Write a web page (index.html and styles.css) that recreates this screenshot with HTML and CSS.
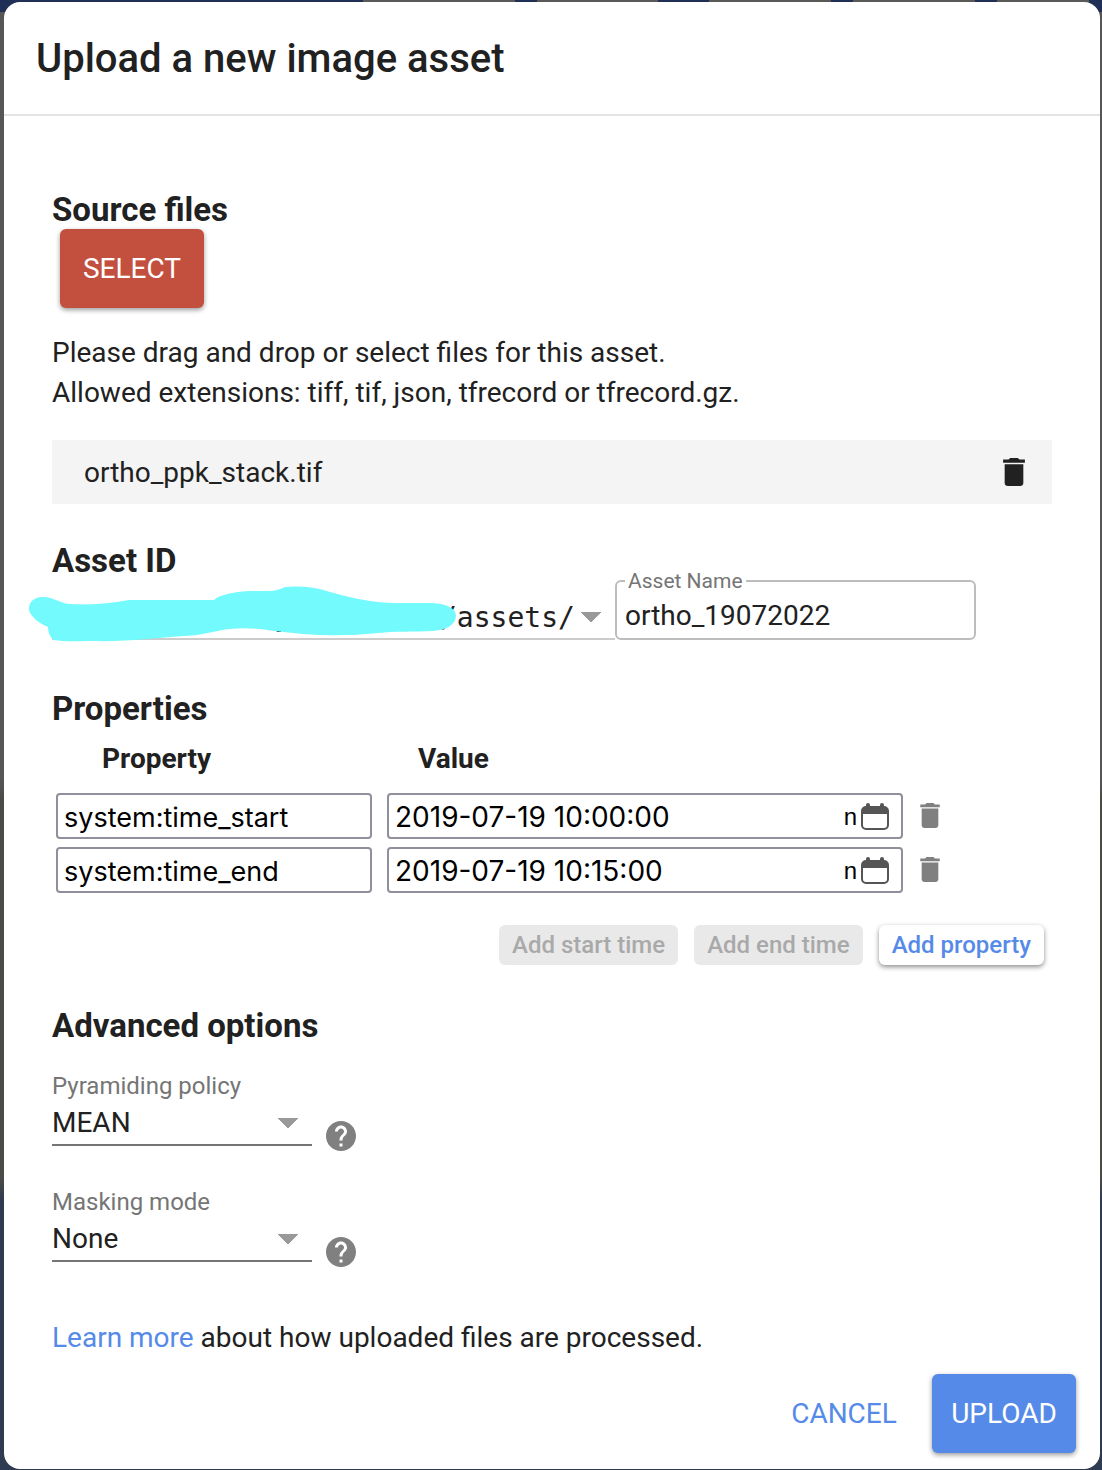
FILE: index.html
```html
<!DOCTYPE html>
<html lang="en">
<head>
<meta charset="utf-8">
<title>Upload a new image asset</title>
<link rel="stylesheet" href="styles.css">
</head>
<body>
<svg class="defs" aria-hidden="true">
  <symbol id="trash" viewBox="5 3 14 18"><path d="M6 19c0 1.100.9 2 2 2h8c1.100 0 2-.9 2-2V7H6v12zM19 4h-3.500l-1-1h-5l-1 1H5v2h14V4z"/></symbol>
  <symbol id="calendar" viewBox="0 0 28 28"><path d="M5 3V2a1.500 1.500 0 0 1 4 0v1h10V2a1.500 1.500 0 0 1 4 0v1a5 5 0 0 1 5 5v14a5 5 0 0 1-5 5H5a5 5 0 0 1-5-5V8a5 5 0 0 1 5-5zM2 11v11a3 3 0 0 0 3 3h18a3 3 0 0 0 3-3V11z" fill-rule="evenodd"/></symbol>
  <symbol id="help" viewBox="2 2 20 20"><path d="M12 2C6.480 2 2 6.480 2 12s4.480 10 10 10 10-4.480 10-10S17.520 2 12 2zm1 17h-2v-2h2v2zm2.070-7.750l-.9.920C13.450 12.900 13 13.500 13 15h-2v-.5c0-1.100.45-2.100 1.170-2.830l1.240-1.260c.37-.36.59-.86.59-1.410 0-1.100-.9-2-2-2s-2 .9-2 2H8c0-2.210 1.790-4 4-4s4 1.790 4 4c0 .88-.36 1.680-.93 2.250z"/></symbol>
</svg>
<main class="dialog">
  <header class="dialog-header"><h1>Upload a new image asset</h1></header>
  <form class="dialog-body" id="upload-form">
    <section class="source">
      <h2>Source files</h2>
      <button type="button" class="btn btn-red">SELECT</button>
      <p>Please drag and drop or select files for this asset.<br>Allowed extensions: tiff, tif, json, tfrecord or tfrecord.gz.</p>
      <div class="file">
        <span>ortho_ppk_stack.tif</span>
        <button type="button" class="icon-btn" aria-label="Remove file"><svg class="trash-large"><use href="#trash"/></svg></button>
      </div>
    </section>

    <section class="asset">
      <h2>Asset ID</h2>
      <div class="asset-row">
        <div class="root">
          <select class="root-select" aria-label="Asset root"><option>/assets/</option></select>
          <svg class="redaction" viewBox="0 0 432 58" aria-hidden="true">
            <path d="M246 42h6v4h-4z" fill="#222"/>
            <path d="M13 11C22 10 33 18 41 18C57 19 73 18 88 16Q94 15 100 14H185Q192 7 220 5H240Q248 5 256 1Q280-1 301 6Q340 17 365 17H403C418 18 427 22 427 30C426 40 416 44 403 45C388 46 363 45 350 47Q310 51 274 48L245 45Q225 41 200 43C180 46 175 49 155 50C125 52 100 56 60 55Q35 56 25 54Q19 50 19 41C12 38 2 32 0 24C-1 17 5 11 13 11Z" fill="#72fafd"/>
          </svg>
        </div>
        <fieldset class="outlined">
          <legend><label for="asset-name">Asset Name</label></legend>
          <input id="asset-name" type="text" value="ortho_19072022">
        </fieldset>
      </div>
    </section>

    <section class="properties">
      <h2>Properties</h2>
      <table>
        <thead><tr><th class="col-name">Property</th><th class="col-value">Value</th><td></td></tr></thead>
        <tbody>
          <tr>
            <td><input class="field" type="text" aria-label="Property" value="system:time_start"></td>
            <td><div class="field date"><input type="text" aria-label="Value" value="2019-07-19 10:00:00"><span class="hint">n</span><button type="button" class="icon-btn" aria-label="Pick date"><svg class="calendar"><use href="#calendar"/></svg></button></div></td>
            <td><button type="button" class="icon-btn remove" aria-label="Remove property"><svg class="trash-small"><use href="#trash"/></svg></button></td>
          </tr>
          <tr>
            <td><input class="field" type="text" aria-label="Property" value="system:time_end"></td>
            <td><div class="field date"><input type="text" aria-label="Value" value="2019-07-19 10:15:00"><span class="hint">n</span><button type="button" class="icon-btn" aria-label="Pick date"><svg class="calendar"><use href="#calendar"/></svg></button></div></td>
            <td><button type="button" class="icon-btn remove" aria-label="Remove property"><svg class="trash-small"><use href="#trash"/></svg></button></td>
          </tr>
        </tbody>
      </table>
      <div class="property-actions">
        <button type="button" class="small" disabled>Add start time</button>
        <button type="button" class="small" disabled>Add end time</button>
        <button type="button" class="small raised">Add property</button>
      </div>
    </section>

    <section class="advanced">
      <h2>Advanced options</h2>
      <div class="option">
        <div class="option-field">
          <label for="pyramiding">Pyramiding policy</label>
          <select id="pyramiding"><option>MEAN</option></select>
        </div>
        <button type="button" class="icon-btn" aria-label="Pyramiding policy help"><svg class="help"><use href="#help"/></svg></button>
      </div>
      <div class="option">
        <div class="option-field">
          <label for="masking">Masking mode</label>
          <select id="masking"><option>None</option></select>
        </div>
        <button type="button" class="icon-btn" aria-label="Masking mode help"><svg class="help"><use href="#help"/></svg></button>
      </div>
    </section>
    <p class="more"><a href="#">Learn more</a> about how uploaded files are processed.</p>
  </form>
  <footer class="dialog-footer">
    <button type="button" class="btn btn-text">CANCEL</button>
    <button type="submit" form="upload-form" class="btn btn-blue">UPLOAD</button>
  </footer>
</main>
</body>
</html>
```
FILE: styles.css
```css
* { box-sizing: border-box; }

body {
  margin: 0;
  padding: 2px 2px 1px 4px;
  min-height: 100vh;
  font: 28px/40px Roboto, "Liberation Sans", sans-serif;
  color: #212121;
  background:
    linear-gradient(90deg, #1f2f56 363px, #5b5858 363px 515px, #1f2f56 515px 537px, #5b5858 537px 658px, #1f2f56 658px 709px, #5b5858 709px 831px, #1f2f56 831px 853px, #5b5858 853px 975px, #1f2f56 975px 997px, #5b5858 997px 1089px, #1f2f56 1089px) 0 0 / 100% 12px no-repeat,
    linear-gradient(#575655 780px, #494b47 800px 1180px, #2f3b50 1200px);
}

.defs { display: none; }
svg { display: block; fill: currentColor; }
button, input, select { font: inherit; color: inherit; margin: 0; }
button { cursor: pointer; }
h1, h2, p { margin: 0; }

.dialog {
  background: #fff;
  border-radius: 16px;
}

.dialog-header {
  padding: 33px 32px 31px;
  border-bottom: 2px solid #e4e4e4;
}

h1 { font-size: 40px; line-height: 48px; font-weight: 500; }
h2 { padding-top: 2px; font-size: 33px; line-height: 38px; font-weight: 700; }

.dialog-body { padding: 73px 48px 0; }

.btn {
  height: 79px;
  min-width: 144px;
  padding: 0 16px;
  border: 0;
  border-radius: 6px;
}
.btn-red, .btn-blue { color: #fff; box-shadow: 0 2px 5px rgba(0, 0, 0, .4); }
.btn-red { display: block; margin: 0 8px 25px; background: #c3503e; }
.btn-blue { background: #568ae8; }
.btn-text { background: none; color: #568ae8; }

.icon-btn { display: block; padding: 0; border: 0; background: none; }

.file {
  display: flex;
  align-items: center;
  justify-content: space-between;
  height: 64px;
  margin-top: 27px;
  padding: 0 27px 0 32px;
  background: #f4f4f4;
}
.file span { padding-top: 2px; }
.trash-large { width: 22px; height: 28px; }
.trash-small { width: 20px; height: 25px; }
.calendar { width: 28px; height: 28px; color: #555; }
.help { width: 30px; height: 30px; color: #808080; }

.asset { margin-top: 36px; }
.asset-row { display: flex; align-items: flex-end; height: 60px; }

select {
  display: block;
  appearance: none;
  border: 0;
  border-radius: 0;
}

.root { position: relative; flex: 0 1 563px; }
.root-select {
  width: 100%;
  height: 60px;
  padding: 18px 40px 0 388px;
  border-bottom: 2px solid #ccc;
  font-family: "DejaVu Sans Mono", monospace;
  background: linear-gradient(to bottom right, #999 50%, transparent 51%) 539px 32px / 10px 10px no-repeat,
    linear-gradient(to bottom left, #999 50%, transparent 51%) 529px 32px / 10px 10px no-repeat;
}
.redaction {
  position: absolute;
  left: -23px;
  bottom: -4px;
  width: 432px;
  height: 58px;
  overflow: visible;
}

.outlined {
  flex: 0 1 361px;
  min-width: 0;
  height: 69px;
  margin: 0;
  padding: 0 8px;
  border: 2px solid #bdbdbd;
  border-radius: 6px;
}
.outlined legend { padding: 0 3px; font-size: 21px; line-height: 20px; color: #757575; }
.outlined input { display: block; width: 100%; height: 48px; padding: 0; border: 0; background: none; }

.properties { margin-top: 48px; }
table { border-collapse: separate; border-spacing: 4px 8px; margin-top: 4px; }
th, td { padding: 0; }
th { height: 45px; line-height: 38px; text-align: left; vertical-align: top; }
.col-name { padding-left: 46px; }
.col-value { padding-left: 42px; }
td:nth-child(2) { padding-left: 11px; }
.field {
  display: block;
  width: 316px;
  height: 46px;
  padding: 2px 7px 0 6px;
  border: 2px solid #8f8f9d;
  border-radius: 4px;
  background: #fff;
  color: #000;
  font-family: Inter, "Noto Sans", sans-serif;
  font-size: 27px;
}
.date { display: flex; align-items: center; width: 516px; padding-right: 12px; font-size: 28px; }
.date input { flex: 1; min-width: 0; padding: 0; border: 0; background: none; }
.hint { margin-right: 4px; font-family: "Liberation Sans", sans-serif; font-size: 24px; }
.remove { margin: 0 0 2px 13px; color: #808080; }

.property-actions { display: flex; justify-content: flex-end; gap: 16px; margin: 24px 8px 0 0; }
.small {
  height: 40px;
  padding: 0 13px;
  border: 0;
  border-radius: 6px;
  font-size: 24px;
  font-weight: 500;
  background: #e9e9e9;
  color: #a9a9a9;
}
.raised { background: #fff; color: #568ae8; box-shadow: 0 2px 5px rgba(0, 0, 0, .45); }

.advanced { margin-top: 40px; }
.advanced h2 { margin-bottom: 1px; }
.option { display: flex; align-items: flex-end; gap: 14px; height: 100px; }
.option + .option { margin-top: 16px; }
.option .icon-btn { margin-bottom: -5px; }
.option-field { width: 260px; }
.option-field label { display: block; font-size: 24px; line-height: 32px; color: #757575; }
.option-field select {
  width: 100%;
  height: 44px;
  padding: 0;
  border-bottom: 2px solid #757575;
  background: linear-gradient(to bottom right, #999 50%, transparent 51%) 236px 16px / 10px 10px no-repeat,
    linear-gradient(to bottom left, #999 50%, transparent 51%) 226px 16px / 10px 10px no-repeat;
}

.more { margin-top: 56px; }
a { color: #568ae8; text-decoration: none; }

.dialog-footer { display: flex; justify-content: flex-end; gap: 16px; padding: 16px 24px; }
```
